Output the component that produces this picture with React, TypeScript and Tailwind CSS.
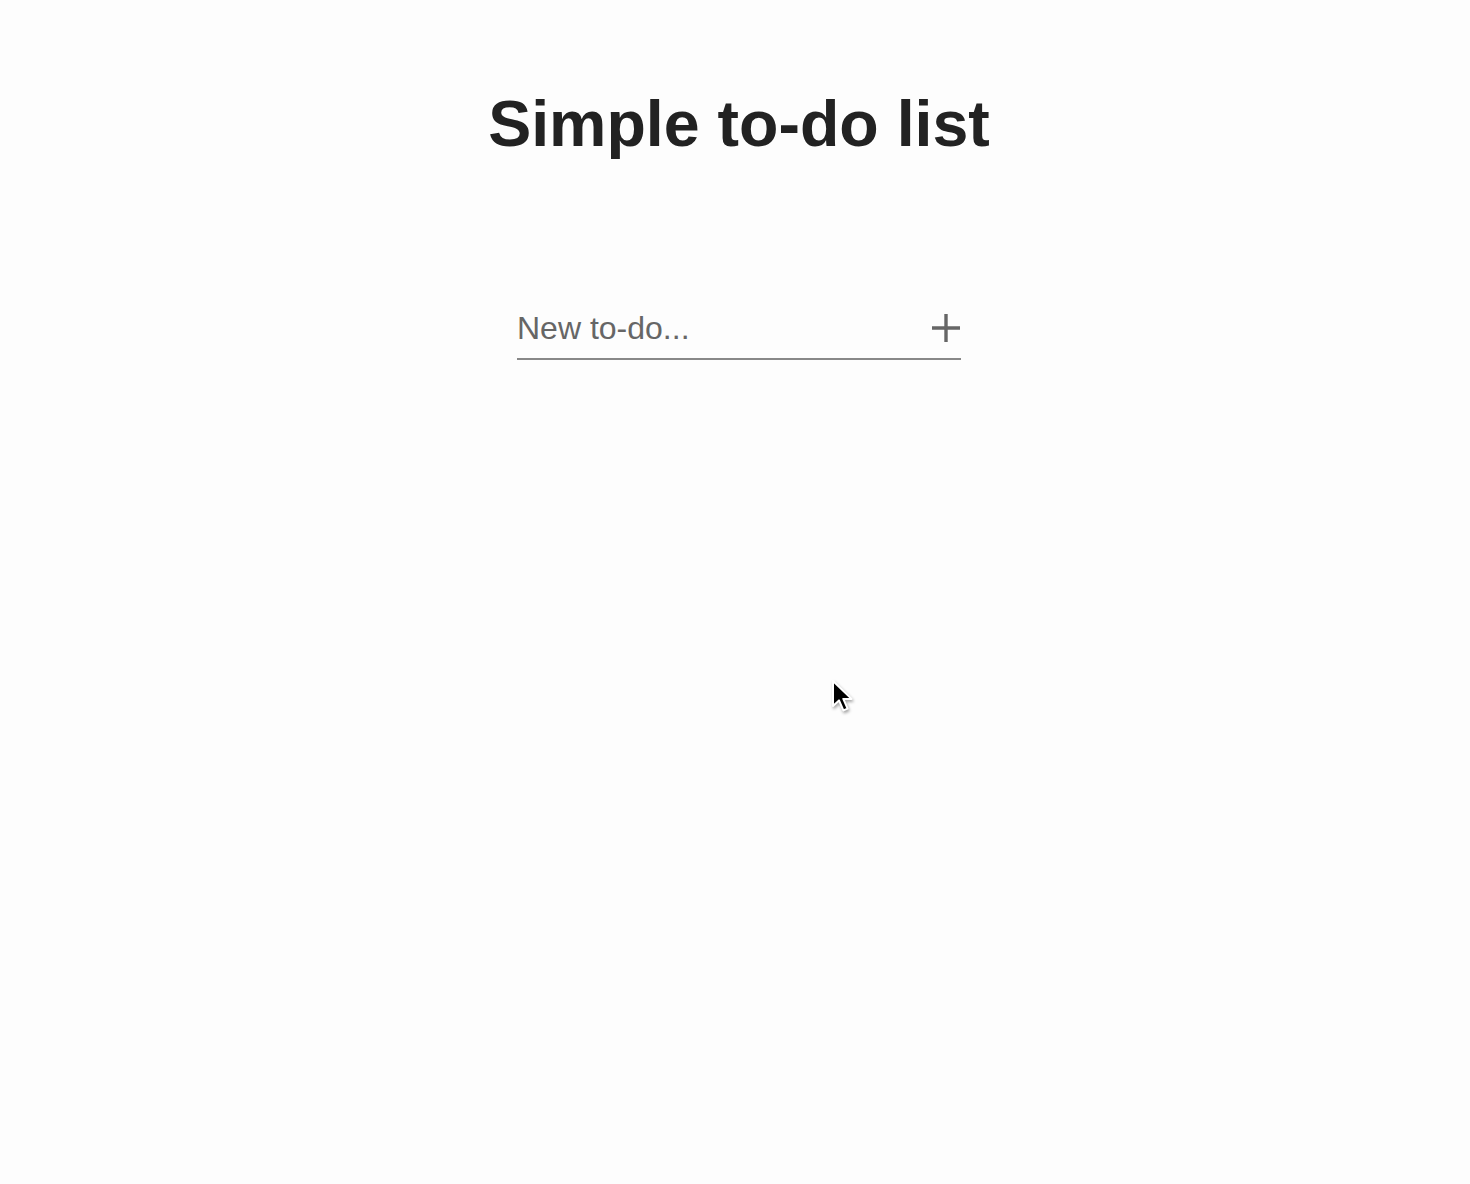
import { useState } from 'react'

function PlusIcon() {
  return (
    <svg width="30" height="30" viewBox="0 0 30 30" className="block">
      <path d="M15 1v28M1 15h28" stroke="#666666" strokeWidth="3.4" fill="none" />
    </svg>
  )
}

function Cursor() {
  return (
    <svg
      width="24"
      height="36"
      viewBox="0 0 24 36"
      className="pointer-events-none absolute left-[830px] top-[679px]"
      style={{ filter: 'drop-shadow(1px 2px 1.5px rgba(0,0,0,0.35))' }}
    >
      <path
        d="M3 2v25l6-5.6 4.4 10 4.2-1.8-4.3-9.7h8.2z"
        fill="#000"
        stroke="#fff"
        strokeWidth="2"
        strokeLinejoin="round"
      />
    </svg>
  )
}

export default function App() {
  const [todo, setTodo] = useState('')

  return (
    <div className="relative min-h-[1184px] w-full bg-[#fdfdfd] font-['Liberation_Sans',Arial,sans-serif]">
      <div className="flex flex-col items-center pl-2">
        <h1 className="mt-[92px] text-[64.5px] font-bold leading-none text-[#222222]">
          Simple to-do list
        </h1>

        <form
          className="mt-[154px] flex w-[444px] items-center border-b-2 border-[#888888] pb-[13px]"
          onSubmit={(e) => {
            e.preventDefault()
            setTodo('')
          }}
        >
          <input
            value={todo}
            onChange={(e) => setTodo(e.target.value)}
            placeholder="New to-do..."
            className="h-[34px] min-w-0 flex-1 bg-transparent text-[32px] leading-[34px] text-[#555555] outline-none placeholder:text-[#666666]"
          />
          <button type="submit" className="ml-2 flex items-center justify-center" aria-label="Add">
            <PlusIcon />
          </button>
        </form>
      </div>

      <Cursor />
    </div>
  )
}
